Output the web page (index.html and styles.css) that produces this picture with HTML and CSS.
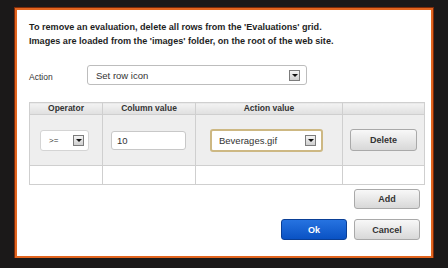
FILE: index.html
```html
<!DOCTYPE html>
<html lang="en">
<head>
    <meta charset="UTF-8">
    <title>Row icon evaluation</title>
    <link rel="stylesheet" href="styles.css">
</head>
<body>
    <div class="dialog">
        <p class="intro">
            To remove an evaluation, delete all rows from the 'Evaluations' grid.<br>
            Images are loaded from the 'images' folder, on the root of the web site.
        </p>

        <div class="action-row">
            <label class="action-label">Action</label>
            <div class="combo combo-action">
                <span>Set row icon</span>
                <span class="arrow"></span>
            </div>
        </div>

        <table class="grid">
            <thead>
                <tr>
                    <th class="col-op">Operator</th>
                    <th class="col-val">Column value</th>
                    <th class="col-act">Action value</th>
                    <th class="col-btn"></th>
                </tr>
            </thead>
            <tbody>
                <tr class="edit-row">
                    <td>
                        <div class="combo combo-op">
                            <span>&gt;=</span>
                            <span class="arrow"></span>
                        </div>
                    </td>
                    <td><div class="text-input">10</div></td>
                    <td>
                        <div class="combo combo-img">
                            <span>Beverages.gif</span>
                            <span class="arrow"></span>
                        </div>
                    </td>
                    <td><button class="btn btn-delete">Delete</button></td>
                </tr>
                <tr class="empty-row">
                    <td></td><td></td><td></td><td></td>
                </tr>
            </tbody>
        </table>

        <div class="add-row">
            <button class="btn">Add</button>
        </div>

        <div class="footer">
            <button class="btn btn-ok">Ok</button>
            <button class="btn">Cancel</button>
        </div>
    </div>
</body>
</html>
```

FILE: styles.css
```css
html, body {
    margin: 0;
    padding: 0;
    background-color: #1b1919;
    font-family: "Liberation Sans", Arial, sans-serif;
    color: #222;
}
.dialog {
    box-sizing: border-box;
    width: 418px;
    height: 250px;
    margin: 8px 0 0 15px;
    padding: 10px 11px 0 12px;
    background-color: #fff;
    border: 2px solid #e2651f;
    box-shadow: 0 0 0 1px #7a2a0a;
    display: flex;
    flex-direction: column;
}
.intro {
    margin: 0;
    font-size: 9.1px;
    font-weight: bold;
    line-height: 14px;
    color: #1e1e1e;
}
.action-row {
    display: flex;
    align-items: center;
    margin-top: 17px;
}
.action-label {
    width: 58px;
    padding-top: 3px;
    font-size: 8.5px;
    color: #333;
}
.combo {
    box-sizing: border-box;
    display: flex;
    align-items: center;
    justify-content: space-between;
    background: #fff;
    border: 1px solid #bdbdbd;
    border-radius: 3px;
    font-size: 9px;
    color: #333;
}
.combo-action {
    width: 220px;
    height: 20px;
    padding: 0 6px 0 8px;
    font-size: 9.5px;
}
.arrow {
    box-sizing: border-box;
    width: 11px;
    height: 11px;
    border: 1px solid #7c7c7c;
    background: linear-gradient(#f4f4f4, #cfcfcf);
    position: relative;
}
.arrow::after {
    content: "";
    position: absolute;
    left: 2px;
    top: 3px;
    border-left: 3px solid transparent;
    border-right: 3px solid transparent;
    border-top: 3px solid #111;
}
.grid {
    margin-top: 17px;
    width: 391px;
    border-collapse: collapse;
    table-layout: fixed;
}
.grid th,
.grid td {
    border: 1px solid #cfcfcf;
    padding: 0;
}
.grid th {
    height: 11px;
    font-size: 8.5px;
    line-height: 11px;
    font-weight: bold;
    color: #333;
    background: linear-gradient(#f3f3f3, #dfdfdf);
}
.col-op { width: 72px; }
.col-val { width: 92px; }
.col-act { width: 146px; }
.col-btn { width: 81px; }
.edit-row td {
    height: 50px;
    background-color: #eee;
    text-align: center;
}
.empty-row td {
    height: 18px;
    background-color: #fff;
}
.combo-op {
    width: 49px;
    height: 21px;
    margin-left: 10px;
    padding: 0 4px 0 8px;
    font-size: 8px;
    border-color: #d4d4d4;
}
.text-input {
    box-sizing: border-box;
    width: 75px;
    height: 19px;
    margin-left: 8px;
    padding: 0 5px;
    text-align: left;
    line-height: 17px;
    font-size: 9.5px;
    color: #333;
    background: #fff;
    border: 1px solid #c8c8c8;
    border-radius: 3px;
}
.combo-img {
    width: 113px;
    height: 23px;
    margin-left: 14px;
    padding: 0 5px 0 7px;
    border: 2px solid #cdb883;
    font-size: 9.5px;
}
.btn {
    box-sizing: border-box;
    width: 66px;
    height: 21px;
    padding: 0;
    font-family: "Liberation Sans", Arial, sans-serif;
    font-size: 9px;
    font-weight: bold;
    color: #333;
    background: linear-gradient(#f8f8f8, #d8d8d8);
    border: 1px solid #a9a9a9;
    border-radius: 3px;
}
.btn-delete {
    width: 67px;
    height: 22px;
}
.add-row {
    display: flex;
    justify-content: flex-end;
    margin-top: 4px;
}
.add-row .btn {
    height: 20px;
}
.footer {
    display: flex;
    justify-content: flex-end;
    gap: 7px;
    margin-top: 10px;
}
.btn-ok {
    color: #fff;
    background: linear-gradient(#2673e0, #0a52c4);
    border-color: #0a3f96;
}
```
